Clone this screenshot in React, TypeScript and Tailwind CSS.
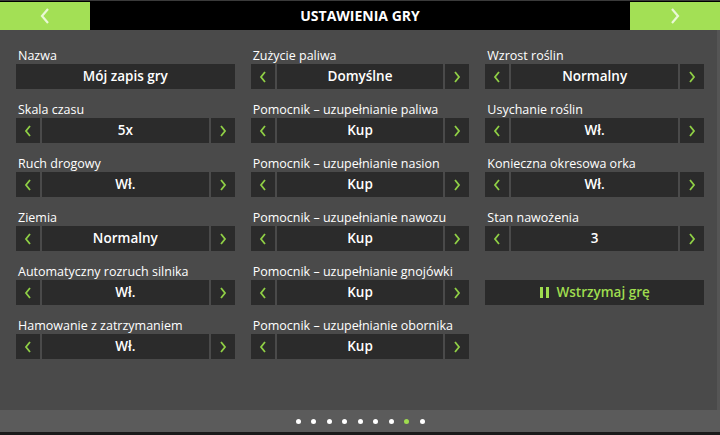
import React from "react";

type Item =
  | { kind: "text"; label: string; value: string }
  | { kind: "select"; label: string; value: string }
  | { kind: "button"; value: string };

const columns: Item[][] = [
  [
    { kind: "text", label: "Nazwa", value: "Mój zapis gry" },
    { kind: "select", label: "Skala czasu", value: "5x" },
    { kind: "select", label: "Ruch drogowy", value: "Wł." },
    { kind: "select", label: "Ziemia", value: "Normalny" },
    { kind: "select", label: "Automatyczny rozruch silnika", value: "Wł." },
    { kind: "select", label: "Hamowanie z zatrzymaniem", value: "Wł." },
  ],
  [
    { kind: "select", label: "Zużycie paliwa", value: "Domyślne" },
    { kind: "select", label: "Pomocnik – uzupełnianie paliwa", value: "Kup" },
    { kind: "select", label: "Pomocnik – uzupełnianie nasion", value: "Kup" },
    { kind: "select", label: "Pomocnik – uzupełnianie nawozu", value: "Kup" },
    { kind: "select", label: "Pomocnik – uzupełnianie gnojówki", value: "Kup" },
    { kind: "select", label: "Pomocnik – uzupełnianie obornika", value: "Kup" },
  ],
  [
    { kind: "select", label: "Wzrost roślin", value: "Normalny" },
    { kind: "select", label: "Usychanie roślin", value: "Wł." },
    { kind: "select", label: "Konieczna okresowa orka", value: "Wł." },
    { kind: "select", label: "Stan nawożenia", value: "3" },
    { kind: "button", value: "Wstrzymaj grę" },
  ],
];

const Chevron = ({ dir }: { dir: "left" | "right" }) => (
  <svg width="8" height="12" viewBox="0 0 8 12">
    <polyline
      points={dir === "left" ? "6,1 2,6 6,11" : "2,1 6,6 2,11"}
      fill="none"
      stroke="currentColor"
      strokeWidth="1.8"
    />
  </svg>
);

const Field = ({ item }: { item: Item }) => {
  if (item.kind === "button") {
    return (
      <div className="flex flex-col">
        <div className="h-[17px]" />
        <div className="h-[25px] bg-[#2a2a2a] flex items-center justify-center gap-2 text-[#9fdc4f] text-[13.5px] font-semibold">
          <span className="flex gap-[3px]">
            <span className="w-[3px] h-[11px] bg-[#9fdc4f]" />
            <span className="w-[3px] h-[11px] bg-[#9fdc4f]" />
          </span>
          {item.value}
        </div>
      </div>
    );
  }
  return (
    <div className="flex flex-col">
      <div className="h-[17px] text-[12.5px] leading-[17px] text-white pl-[2px]">{item.label}</div>
      {item.kind === "text" ? (
        <div className="h-[25px] bg-[#2b2b2b] flex items-center justify-center text-white text-[13.5px] font-semibold">
          {item.value}
        </div>
      ) : (
        <div className="h-[25px] flex gap-[2px]">
          <div className="w-[24px] bg-[#2b2b2b] flex items-center justify-center text-[#8fcf45]">
            <Chevron dir="left" />
          </div>
          <div className="flex-1 bg-[#2b2b2b] flex items-center justify-center text-white text-[13.5px] font-semibold">
            {item.value}
          </div>
          <div className="w-[24px] bg-[#2b2b2b] flex items-center justify-center text-[#8fcf45]">
            <Chevron dir="right" />
          </div>
        </div>
      )}
    </div>
  );
};

export default function App() {
  return (
    <div
      className="w-[720px] h-[435px] flex flex-col bg-black overflow-hidden"
      style={{ fontFamily: '"Open Sans", "Noto Sans", sans-serif' }}
    >
      <header className="h-[30px] bg-black flex items-stretch border-t border-[#3a3a3a]">
        <div className="w-[90px] mt-[1px] bg-[#a3e055] flex items-center justify-center text-[#eaf8d6]">
          <svg width="12" height="18" viewBox="0 0 12 18">
            <polyline points="9,2 3,9 9,16" fill="none" stroke="currentColor" strokeWidth="2.2" />
          </svg>
        </div>
        <div className="flex-1 flex items-center justify-center text-white text-[14px] font-bold">
          USTAWIENIA GRY
        </div>
        <div className="w-[90px] mt-[1px] bg-[#a3e055] flex items-center justify-center text-[#eaf8d6]">
          <svg width="12" height="18" viewBox="0 0 12 18">
            <polyline points="3,2 9,9 3,16" fill="none" stroke="currentColor" strokeWidth="2.2" />
          </svg>
        </div>
      </header>

      <main className="h-[380px] bg-[#4a4a4a] px-4 pt-[17px] grid grid-cols-3 gap-x-4 content-start shadow-[inset_-3px_0_0_#555555]">
        {columns.map((col, i) => (
          <div key={i} className="flex flex-col gap-[12px]">
            {col.map((item, j) => (
              <Field key={j} item={item} />
            ))}
          </div>
        ))}
      </main>

      <footer className="h-[22px] bg-[#5b5b5b] flex items-center justify-center gap-[10.5px]">
        {Array.from({ length: 9 }).map((_, i) => (
          <span
            key={i}
            className={`w-[5px] h-[5px] rounded-full ${i === 7 ? "bg-[#9fdc4f]" : "bg-white"}`}
          />
        ))}
      </footer>
      <div className="h-[3px] bg-[#1a1a1a]" />
    </div>
  );
}
